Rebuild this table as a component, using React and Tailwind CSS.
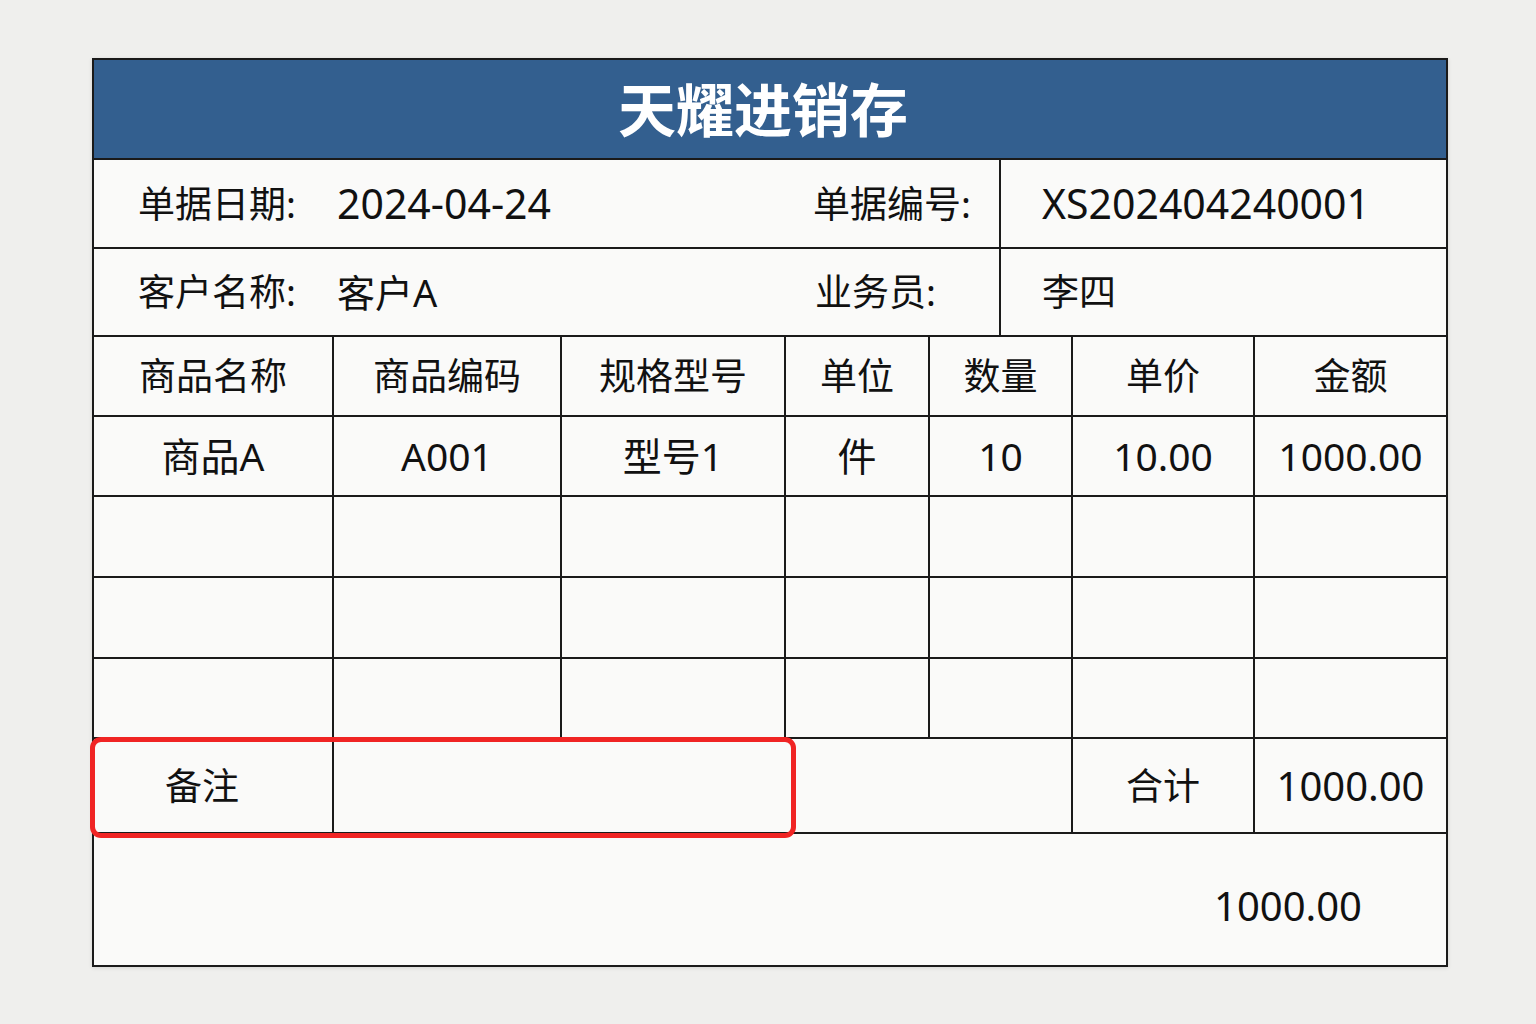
const FONT = { fontFamily: '"Noto Sans", "Noto Sans CJK SC", sans-serif' };

const cols = "grid grid-cols-[240px_228px_224px_144px_143px_182px_1fr]";
const cell = "flex items-center justify-center border-r-2 border-b-2 border-[#1a1a1a]";
const lastCell = "flex items-center justify-center border-b-2 border-[#1a1a1a]";

const headers = ["商品名称", "商品编码", "规格型号", "单位", "数量", "单价", "金额"];
const rows = [
  ["商品A", "A001", "型号1", "件", "10", "10.00", "1000.00"],
  ["", "", "", "", "", "", ""],
  ["", "", "", "", "", "", ""],
  ["", "", "", "", "", "", ""],
];
const rowHeights = ["h-[80px]", "h-[81px]", "h-[81px]", "h-[80px]"];

export default function App() {
  return (
    <div className="min-h-screen bg-[#efefed] pt-[58px] pl-[92px] text-[#111]" style={FONT}>
      <div className="relative w-[1356px] border-2 border-[#1a1a1a] bg-[#fafaf9] shadow-[0_1px_4px_rgba(0,0,0,0.12)]">
        {/* 标题 */}
        <div className="flex h-[100px] items-center justify-center border-b-2 border-[#1a1a1a] bg-[#335f8f]">
          <h1 className="pr-[14px] text-[58px] font-bold text-white">天耀进销存</h1>
        </div>

        {/* 单据信息 */}
        <div className="grid h-[89px] grid-cols-[907px_1fr] border-b-2 border-[#1a1a1a]">
          <div className="flex items-center border-r-2 border-[#1a1a1a] pl-[44px]">
            <span className="w-[199px] text-[37px]">单据日期:</span>
            <span className="w-[476px] text-[41px]">2024-04-24</span>
            <span className="text-[37px]">单据编号:</span>
          </div>
          <div className="flex items-center pl-[41px] text-[41px]">XS202404240001</div>
        </div>
        <div className="grid h-[88px] grid-cols-[907px_1fr] border-b-2 border-[#1a1a1a]">
          <div className="flex items-center border-r-2 border-[#1a1a1a] pl-[44px]">
            <span className="w-[199px] text-[37px]">客户名称:</span>
            <span className="w-[478px] text-[38px]">客户A</span>
            <span className="text-[37px]">业务员:</span>
          </div>
          <div className="flex items-center pl-[41px] text-[37px]">李四</div>
        </div>

        {/* 商品明细 */}
        <div className={`${cols} h-[80px] text-[37px]`}>
          {headers.map((h, i) => (
            <div key={h} className={i === headers.length - 1 ? lastCell : cell}>
              {h}
            </div>
          ))}
        </div>
        {rows.map((r, ri) => (
          <div key={ri} className={`${cols} ${rowHeights[ri]} text-[39px]`}>
            {r.map((v, i) => (
              <div key={i} className={i === r.length - 1 ? lastCell : cell}>
                {v}
              </div>
            ))}
          </div>
        ))}

        {/* 备注 / 合计 */}
        <div className="grid h-[95px] grid-cols-[240px_452px_287px_182px_1fr] text-[37px]">
          <div className={`${cell} pr-[22px]`}>备注</div>
          <div className="border-b-2 border-[#1a1a1a]"></div>
          <div className={cell}></div>
          <div className={cell}>合计</div>
          <div className={`${lastCell} text-[40px]`}>1000.00</div>
        </div>

        <div className="flex h-[131px] items-center justify-end pr-[84px] pt-[12px] text-[40px]">1000.00</div>

        {/* 高亮框 */}
        <div className="pointer-events-none absolute left-[-4px] top-[677px] h-[101px] w-[706px] rounded-[11px] border-[5px] border-[#f02424]" />
      </div>
    </div>
  );
}
